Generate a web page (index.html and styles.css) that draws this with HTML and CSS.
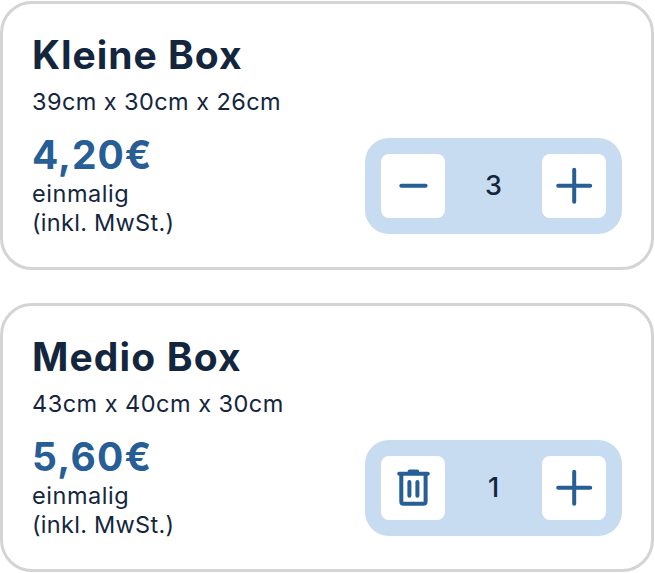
FILE: index.html
```html
<!DOCTYPE html>
<html lang="de">
<head>
<meta charset="utf-8">
<title>Boxen</title>
<link rel="stylesheet" href="styles.css">
</head>
<body>
<main class="list">
  <article class="card">
    <h2 class="title">Kleine Box</h2>
    <p class="size">39cm x 30cm x 26cm</p>
    <div class="row">
      <div class="pricing">
        <p class="price">4,20€</p>
        <p class="note">einmalig</p>
        <p class="note tax">(inkl. MwSt.)</p>
      </div>
      <div class="stepper">
        <button class="btn" aria-label="Weniger"><svg viewBox="0 0 64 64"><path d="M20.3 31.8H44.6"/></svg></button>
        <span class="count">3</span>
        <button class="btn" aria-label="Mehr"><svg viewBox="0 0 64 64"><path d="M16.2 31.8H48.2M32.2 15.8V47.8"/></svg></button>
      </div>
    </div>
  </article>
  <article class="card">
    <h2 class="title medio">Medio Box</h2>
    <p class="size size-medio">43cm x 40cm x 30cm</p>
    <div class="row">
      <div class="pricing">
        <p class="price price-medio">5,60€</p>
        <p class="note">einmalig</p>
        <p class="note tax">(inkl. MwSt.)</p>
      </div>
      <div class="stepper">
        <button class="btn" aria-label="Entfernen"><svg viewBox="0 0 64 64"><path d="M18.2 17.7H46.8M28.6 15.6H36.2M20.3 18V45.4Q20.3 47.7 22.6 47.7H42.3Q44.6 47.7 44.6 45.4V18M28.4 26V39.8M36.4 26V39.8"/></svg></button>
        <span class="count">1</span>
        <button class="btn" aria-label="Mehr"><svg viewBox="0 0 64 64"><path d="M16.2 31.8H48.2M32.2 15.8V47.8"/></svg></button>
      </div>
    </div>
  </article>
</main>
</body>
</html>
```
FILE: styles.css
```css
* { box-sizing: border-box; }
body {
  margin: 0;
  background: #fff;
  color: #14263e;
  font-family: Inter, "Liberation Sans", sans-serif;
}
h2, p { margin: 0; }
.list {
  display: flex;
  flex-direction: column;
  gap: 33px;
  padding-top: 1px;
}
.card {
  width: 654px;
  height: 269px;
  padding: 29px 29px 0;
  border: 3px solid #d4d4d4;
  border-radius: 32px;
}
.title {
  font-size: 39px;
  font-weight: 700;
  line-height: 44px;
  letter-spacing: 0.98px;
}
.medio { letter-spacing: 1.15px; }
.size {
  margin-top: 11px;
  font-size: 23.5px;
  line-height: 28px;
  letter-spacing: 0.42px;
}
.size-medio { letter-spacing: 0.48px; }
.row {
  display: flex;
  justify-content: space-between;
  margin-top: 19px;
}
.price {
  color: #265e95;
  font-size: 39px;
  font-weight: 700;
  line-height: 40px;
  letter-spacing: 0.95px;
}
.price-medio { letter-spacing: 1.25px; }
.note {
  font-size: 23.5px;
  line-height: 28.5px;
  letter-spacing: 0.55px;
}
.tax { letter-spacing: 0.28px; }
.price + .note { margin-top: 5px; }
.stepper {
  display: flex;
  align-items: center;
  justify-content: space-between;
  width: 257px;
  height: 96px;
  margin-top: 3px;
  padding: 16px;
  border-radius: 24px;
  background: #c8dcf1;
}
.btn {
  width: 64px;
  height: 64px;
  padding: 0;
  border: 0;
  border-radius: 8px;
  background: #fff;
}
.btn svg {
  display: block;
  width: 64px;
  height: 64px;
  fill: none;
  stroke: #265e95;
  stroke-width: 4;
  stroke-linecap: round;
}
.count {
  font-size: 27px;
  font-weight: 500;
  line-height: 32px;
}
```
